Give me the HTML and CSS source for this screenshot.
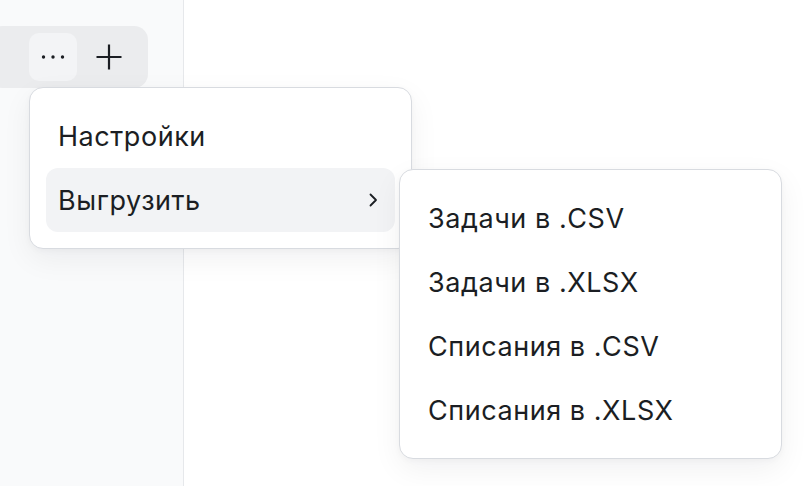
FILE: index.html
```html
<!DOCTYPE html>
<html lang="ru">
<head>
<meta charset="utf-8">
<title>Меню</title>
<link rel="stylesheet" href="styles.css">
</head>
<body>
<div class="app">
  <aside class="sidebar">
    <div class="toolbar">
      <button class="tool-btn tool-btn--active" aria-label="Ещё">
        <svg width="24" height="24" viewBox="0 0 24 24"><circle cx="2.5" cy="12" r="1.7"/><circle cx="12" cy="12" r="1.7"/><circle cx="21.5" cy="12" r="1.7"/></svg>
      </button>
      <button class="tool-btn" aria-label="Добавить">
        <svg width="28" height="28" viewBox="0 0 28 28"><path d="M14 1.5v25M1.5 14h25" stroke-width="2.2" fill="none"/></svg>
      </button>
    </div>
  </aside>
  <main class="content"></main>

  <div class="menu menu--main">
    <div class="menu-item">Настройки</div>
    <div class="menu-item menu-item--open">
      <span>Выгрузить</span>
      <svg class="chevron" width="12" height="16" viewBox="0 0 12 16"><path d="M3.5 2.5L9 8l-5.5 5.5" fill="none" stroke-width="1.8" stroke-linecap="round" stroke-linejoin="round"/></svg>
    </div>
  </div>

  <div class="menu menu--sub">
    <div class="menu-item">Задачи в .CSV</div>
    <div class="menu-item">Задачи в .XLSX</div>
    <div class="menu-item">Списания в .CSV</div>
    <div class="menu-item">Списания в .XLSX</div>
  </div>
</div>
</body>
</html>
```

FILE: styles.css
```css
* { box-sizing: border-box; }

html, body {
  margin: 0;
  height: 100%;
  background: #ffffff;
  font-family: Inter, "Noto Sans", "Liberation Sans", sans-serif;
  color: #1b1e23;
}

.app {
  position: relative;
  display: flex;
  width: 810px;
  height: 486px;
  overflow: hidden;
}

.sidebar {
  width: 184px;
  flex: none;
  background: #f9fafb;
  border-right: 1.5px solid #e6e8eb;
  padding-top: 26px;
}

.content {
  flex: 1;
  background: #ffffff;
}

.toolbar {
  display: flex;
  align-items: center;
  gap: 8px;
  width: 160px;
  height: 62px;
  margin-left: -12px;
  padding-left: 41px;
  background: #ebecee;
  border-radius: 14px;
}

.tool-btn {
  width: 48px;
  height: 48px;
  display: flex;
  align-items: center;
  justify-content: center;
  padding: 0;
  border: none;
  border-radius: 10px;
  background: transparent;
  color: #1b1e23;
}

.tool-btn--active {
  background: #f3f4f6;
}

.tool-btn svg { fill: #1b1e23; stroke: #1b1e23; overflow: visible; }
.tool-btn--active svg { stroke: none; }

.menu {
  position: absolute;
  width: 383px;
  padding: 16px;
  background: #ffffff;
  border: 1.5px solid #d8dbe0;
  border-radius: 14px;
  box-shadow: 0 10px 30px rgba(17, 24, 39, 0.06), 0 2px 6px rgba(17, 24, 39, 0.03);
}

.menu--main {
  left: 29px;
  top: 87px;
}

.menu--sub {
  left: 399px;
  top: 169px;
}

.menu-item {
  display: flex;
  align-items: center;
  justify-content: space-between;
  height: 64px;
  padding: 0 16px 0 12px;
  border-radius: 12px;
  font-size: 27px;
  font-weight: 400;
  line-height: 1;
  letter-spacing: 0.55px;
}

.menu-item--open {
  background: #f2f3f5;
}

.chevron {
  stroke: #1b1e23;
}
```
